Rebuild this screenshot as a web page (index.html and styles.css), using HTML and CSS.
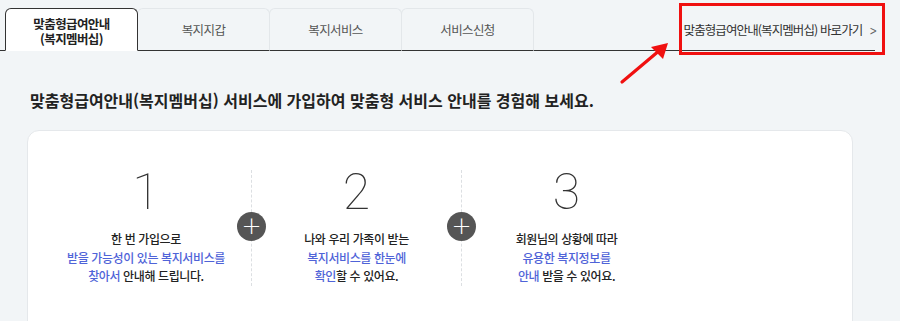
FILE: index.html
```html
<!DOCTYPE html>
<html lang="ko">
<head>
    <meta charset="UTF-8">
    <meta name="viewport" content="width=device-width, initial-scale=1.0">
    <title>맞춤형급여안내(복지멤버십)</title>
    <link rel="stylesheet" href="styles.css">
</head>
<body>
    <div class="page">
        <div class="tab-bar">
            <ul class="tabs">
                <li class="tab active"><span>맞춤형급여안내</span><span>(복지멤버십)</span></li>
                <li class="tab">복지지갑</li>
                <li class="tab">복지서비스</li>
                <li class="tab">서비스신청</li>
            </ul>
            <a class="shortcut" href="#">맞춤형급여안내(복지멤버십) 바로가기 <span class="chevron">&gt;</span></a>
        </div>

        <!-- annotation overlay -->
        <div class="highlight-box"></div>
        <svg class="arrow" width="60" height="50" viewBox="0 0 60 50">
            <line x1="4" y1="47" x2="42" y2="15" stroke="#f01010" stroke-width="3.2" stroke-linecap="round"/>
            <polygon points="50,8 33,12 45,24" fill="#f01010"/>
        </svg>

        <h2 class="intro">맞춤형급여안내(복지멤버십) 서비스에 가입하여 맞춤형 서비스 안내를 경험해 보세요.</h2>

        <div class="card">
            <div class="steps">
                <div class="step">
                    <div class="num">1</div>
                    <p>한 번 가입으로<br><em>받을 가능성이 있는 복지서비스를<br>찾아서</em> 안내해 드립니다.</p>
                </div>
                <div class="step">
                    <span class="plus">+</span>
                    <div class="num">2</div>
                    <p>나와 우리 가족이 받는<br><em>복지서비스를 한눈에<br>확인</em>할 수 있어요.</p>
                </div>
                <div class="step">
                    <span class="plus">+</span>
                    <div class="num">3</div>
                    <p>회원님의 상황에 따라<br><em>유용한 복지정보를<br>안내</em> 받을 수 있어요.</p>
                </div>
            </div>
        </div>
    </div>
</body>
</html>
```

FILE: styles.css
```css
* {
    margin: 0;
    padding: 0;
    box-sizing: border-box;
}

body {
    background: #f2f5f7;
    font-family: 'Noto Sans CJK KR', 'Noto Sans', sans-serif;
    color: #333;
    overflow: hidden;
}

.page {
    position: relative;
    height: 321px;
}

.tab-bar {
    width: 875px;
    height: 51px;
    padding-left: 5px;
    display: flex;
    justify-content: space-between;
    align-items: center;
    border-bottom: 1px solid #333;
}

.tabs {
    list-style: none;
    display: flex;
    align-self: flex-end;
}

.tab {
    width: 133px;
    height: 43px;
    margin-bottom: -1px;
    display: flex;
    flex-direction: column;
    align-items: center;
    justify-content: center;
    text-align: center;
    font-size: 12.5px;
    line-height: 15px;
    letter-spacing: -0.6px;
    color: #555;
    border: 1px solid #e3e7ea;
    border-bottom: 1px solid #333;
    border-radius: 6px 6px 0 0;
}

.tab + .tab {
    margin-left: -1px;
}

.tab.active {
    background: #fff;
    color: #222;
    font-weight: 700;
    border-color: #333;
    border-bottom-color: #fff;
    padding-top: 2px;
    position: relative;
    z-index: 1;
}

.tab.active span {
    display: block;
    height: 15px;
    overflow: visible;
}

.shortcut {
    font-size: 12.5px;
    letter-spacing: -0.9px;
    color: #333;
    text-decoration: none;
    margin-right: -3px;
    padding-top: 8px;
}

.chevron {
    display: inline-block;
    margin-left: 3px;
    color: #666;
    font-family: 'DejaVu Sans', sans-serif;
    font-size: 13px;
    transform: scaleX(0.7);
}

.highlight-box {
    position: absolute;
    left: 679px;
    top: 3px;
    width: 206px;
    height: 52px;
    border: 3px solid #f01010;
}

.arrow {
    position: absolute;
    left: 618px;
    top: 35px;
}

.intro {
    margin: 38px 0 0 30px;
    font-size: 16px;
    line-height: 22px;
    font-weight: 700;
    letter-spacing: 0;
    color: #222;
}

.card {
    margin: 19px 0 0 27px;
    width: 826px;
    height: 220px;
    background: #fff;
    border: 1px solid #e5e8eb;
    border-radius: 12px;
    padding: 39px 0 0 13px;
}

.steps {
    display: flex;
}

.step {
    position: relative;
    width: 210px;
    text-align: center;
}

.step + .step {
    border-left: 1px dashed #dcdfe2;
    height: 116px;
}

.plus {
    position: absolute;
    left: -15px;
    top: 42px;
    width: 29px;
    height: 29px;
    border-radius: 50%;
    background: #555;
    color: #fff;
    font-family: 'DejaVu Sans', sans-serif;
    font-size: 24px;
    font-weight: 200;
    line-height: 28px;
    text-align: center;
}

.num {
    font-family: 'Roboto', 'Inter', sans-serif;
    font-weight: 100;
    font-size: 50px;
    line-height: 50px;
    margin-top: -3px;
    color: #333;
}

.step p {
    margin-top: 13px;
    font-size: 12px;
    line-height: 18.5px;
    letter-spacing: -0.4px;
    color: #222;
    font-weight: 500;
}

.step em {
    font-style: normal;
    color: #4f63d8;
}
```
